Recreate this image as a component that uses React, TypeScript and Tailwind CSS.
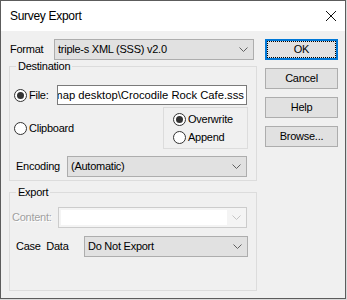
import React from 'react';

const Chevron = ({ color = '#606060' }: { color?: string }) => (
  <svg width="9" height="5" viewBox="0 0 9 5" fill="none" className="shrink-0">
    <path d="M0.5 0.5 L4.5 4.5 L8.5 0.5" stroke={color} strokeWidth="1" />
  </svg>
);

const Combo = ({ text, className }: { text: string; className: string }) => (
  <div className={`h-[21px] flex items-center justify-between bg-[#e1e1e1] border border-[#adadad] pl-[3px] pr-[5px] ${className}`}>
    <span className="whitespace-nowrap">{text}</span>
    <Chevron />
  </div>
);

const Radio = ({ checked, label }: { checked?: boolean; label: string }) => (
  <div className="flex items-center gap-[2px]">
    <div className="w-[13px] h-[13px] rounded-full border border-[#333] bg-white flex items-center justify-center shrink-0">
      {checked && <div className="w-[7px] h-[7px] rounded-full bg-[#333]" />}
    </div>
    <span>{label}</span>
  </div>
);

const Button = ({ label, focused }: { label: string; focused?: boolean }) =>
  focused ? (
    <div className="h-[21px] w-[73px] bg-[#e1e1e1] border-2 border-[#0078d7]">
      <div className="w-full h-full border border-dotted border-black flex items-center justify-center">{label}</div>
    </div>
  ) : (
    <div className="h-[21px] w-[73px] bg-[#e1e1e1] border border-[#adadad] flex items-center justify-center">{label}</div>
  );

export default function App() {
  return (
    <div className="w-[347px] h-[300px] bg-[#d9d9d9] font-['Liberation_Sans',Arial,sans-serif] text-[11px] leading-[13px] tracking-[-0.25px] text-black">
      <div className="w-[346px] h-[299px] border border-[#5c5c5c] flex flex-col bg-[#f0f0f0]">
        {/* title bar */}
        <div className="h-[30px] shrink-0 bg-white flex items-center justify-between pl-[9px] pr-[9px]">
          <span className="text-[12px] tracking-[-0.3px]">Survey Export</span>
          <svg width="10" height="10" viewBox="0 0 10 10">
            <path d="M0 0 L10 10 M10 0 L0 10" stroke="#111" strokeWidth="1" />
          </svg>
        </div>

        <div className="flex-1 flex pt-[8px] pl-[8px]">
          <div className="w-[248px] flex flex-col">
            <div className="flex items-center">
              <span className="w-[45px] pl-[1px]">Format</span>
              <Combo className="w-[200px]" text="triple-s XML (SSS) v2.0" />
            </div>

            <fieldset className="h-[121px] border border-[#dcdcdc]">
              <legend className="ml-[6px] px-[2px]">Destination</legend>
              <div className="flex flex-col pt-[12px] pl-[4px] pr-[8px]">
                <div className="flex items-center h-[20px]">
                  <div className="w-[43px]">
                    <Radio checked label="File:" />
                  </div>
                  <div className="w-[190px] h-[20px] bg-white border border-[#7a7a7a] flex items-center justify-end overflow-hidden pr-[2px]">
                    <span className="whitespace-nowrap text-[11.25px] tracking-normal">map desktop\Crocodile Rock Cafe.sss</span>
                  </div>
                </div>
                <div className="flex items-center justify-between mt-[2px]">
                  <Radio label="Clipboard" />
                  <div className="w-[85px] h-[42px] border border-[#dcdcdc] pl-[9px] pt-[2px] flex flex-col">
                    <div className="h-[18px] flex items-center">
                      <Radio checked label="Overwrite" />
                    </div>
                    <div className="h-[18px] flex items-center">
                      <Radio label="Append" />
                    </div>
                  </div>
                </div>
                <div className="flex items-center mt-[7px]">
                  <span className="w-[53px] pl-[2px]">Encoding</span>
                  <Combo className="w-[180px]" text="(Automatic)" />
                </div>
              </div>
            </fieldset>

            <fieldset className="mt-[5px] h-[105px] border border-[#dcdcdc]">
              <legend className="ml-[6px] px-[2px]">Export</legend>
              <div className="flex flex-col pt-[8px] pr-[8px]">
                <div className="flex items-center">
                  <span className="w-[48px] pl-[2px] text-[#a0a0a0] [text-shadow:1px_1px_0_#ffffff]">Content:</span>
                  <div className="w-[189px] h-[21px] border border-[#cccccc] bg-[#f4f4f4] flex items-center justify-between pl-[2px] pr-[5px]">
                    <div className="w-[166px] h-[15px] bg-white" />
                    <Chevron color="#c4c4c4" />
                  </div>
                </div>
                <div className="flex items-center mt-[8px]">
                  <span className="w-[74px] pl-[6px] whitespace-pre">Case  Data</span>
                  <Combo className="w-[164px]" text="Do Not Export" />
                </div>
              </div>
            </fieldset>
          </div>

          <div className="ml-[8px] flex flex-col gap-[8px]">
            <Button label="OK" focused />
            <Button label="Cancel" />
            <Button label="Help" />
            <Button label="Browse..." />
          </div>
        </div>
      </div>
    </div>
  );
}
